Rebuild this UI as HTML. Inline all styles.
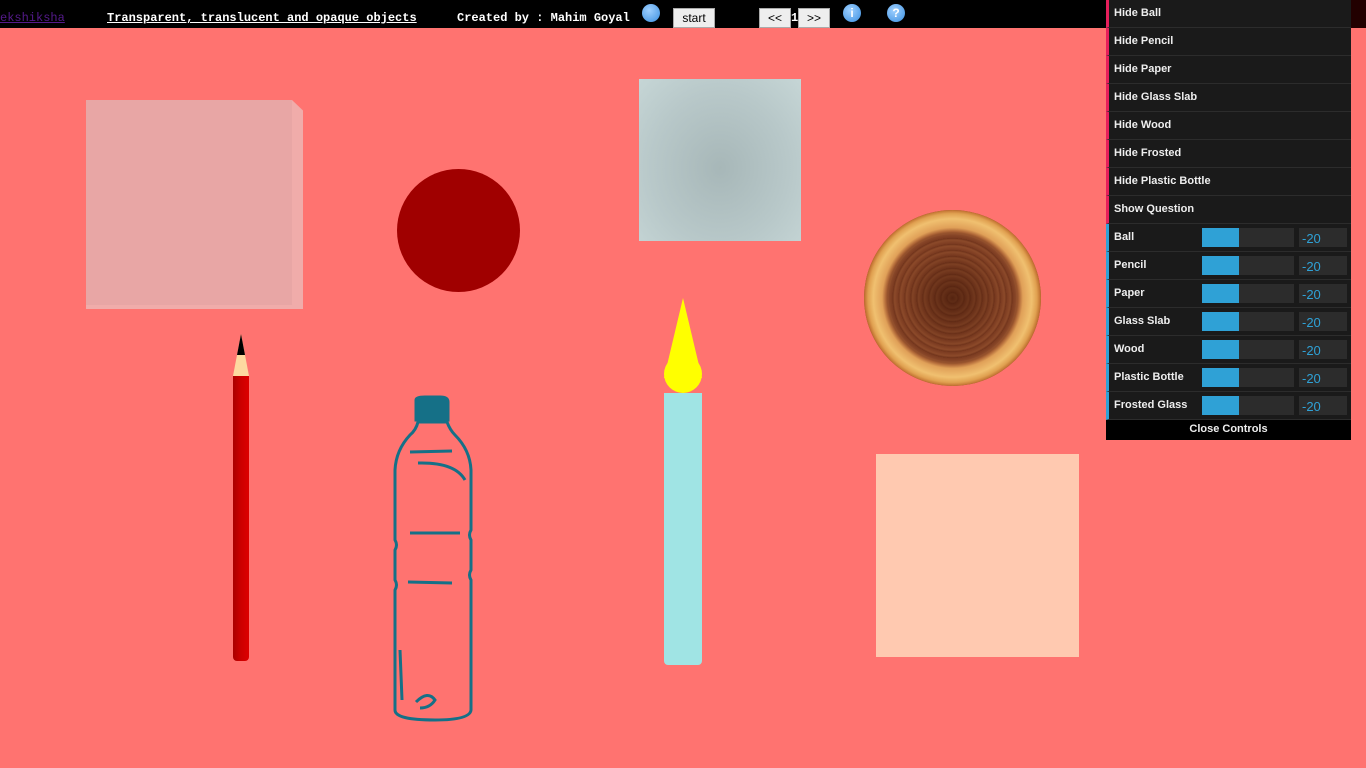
<!DOCTYPE html>
<html><head><meta charset="utf-8"><style>
body{margin:0;width:1366px;height:768px;overflow:hidden;background:#ff7370;font-family:"Liberation Sans",sans-serif;position:relative}
.top{position:absolute;left:0;top:0;width:1366px;height:28px;background:#000;font-family:"Liberation Mono",monospace;font-size:12px;font-weight:bold;color:#fff}
.top span{position:absolute;top:11px;line-height:14px}
.btn{position:absolute;top:8px;height:20px;background:#eee;border:1px solid #aaa;box-sizing:border-box;color:#000;font-family:"Liberation Sans",sans-serif;font-size:12px;font-weight:normal;text-align:center;line-height:18px}
.panel{position:absolute;left:1106px;top:0;width:245px;background:#1a1a1a}
.row{height:27px;border-bottom:1px solid #2c2c2c;border-left:3px solid #e61f5b;color:#eee;font-size:11px;font-weight:bold;line-height:27px;padding-left:5px;position:relative}
.row.s{border-left-color:#2fa1d6}
.bar{position:absolute;left:93px;top:4px;width:92px;height:19px;background:#2c2c2c}
.bar i{display:block;width:37px;height:19px;background:#2fa1d6}
.num{position:absolute;left:190px;top:4px;width:48px;height:19px;background:#2c2c2c;color:#2fa1d6;font-size:13px;font-weight:normal;line-height:21px;padding-left:3px;box-sizing:border-box}
.close{height:20px;background:#000;color:#eee;font-size:11px;font-weight:bold;text-align:center;line-height:19px}
.circ{position:absolute;border-radius:50%}
</style></head><body>
<div class="top">
<span style="left:0;color:#551a8b;text-decoration:underline;font-weight:normal">ekshiksha</span>
<span style="left:107px;text-decoration:underline">Transparent, translucent and opaque objects</span>
<span style="left:457px">Created by : Mahim Goyal</span>
<div class="circ" style="left:642px;top:4px;width:18px;height:18px;background:radial-gradient(circle at 40% 35%,#9fd0ff,#3b8fe0)"></div>
<div class="btn" style="left:673px;width:42px">start</div>
<div class="btn" style="left:759px;width:32px">&lt;&lt;</div>
<span style="left:791px">1</span>
<div class="btn" style="left:798px;width:32px">&gt;&gt;</div>
<div class="circ" style="left:843px;top:4px;width:18px;height:18px;background:radial-gradient(circle at 40% 35%,#9fd0ff,#3b8fe0);color:#fff;font:bold 12px 'Liberation Sans';text-align:center;line-height:18px">i</div>
<div class="circ" style="left:887px;top:4px;width:18px;height:18px;background:radial-gradient(circle at 40% 35%,#9fd0ff,#3b8fe0);color:#fff;font:bold 12px 'Liberation Sans';text-align:center;line-height:18px">?</div>
</div>
<div style="position:absolute;left:1351px;top:0;width:15px;height:768px;background:#ff7370"></div>
<div style="position:absolute;left:1351px;top:0;width:15px;height:28px;background:#200"></div>

<div style="position:absolute;left:86px;top:100px;width:206px;height:205px;background:#e8a6a5"></div>
<div style="position:absolute;left:292px;top:100px;width:11px;height:209px;background:#f0acaa;clip-path:polygon(0 0,100% 5%,100% 100%,0 98%)"></div>
<div style="position:absolute;left:86px;top:305px;width:217px;height:4px;background:#f0acaa"></div>
<div class="circ" style="left:397px;top:169px;width:123px;height:123px;background:#a00000"></div>
<div style="position:absolute;left:639px;top:79px;width:162px;height:162px;background:radial-gradient(ellipse at 50% 55%,#a7b7b8,#b8c8c9 60%,#c6d6d6)"></div>
<div class="circ" style="left:864px;top:210px;width:177px;height:176px;background:radial-gradient(circle,rgba(60,20,5,.6) 0,rgba(0,0,0,0) 40%),repeating-radial-gradient(circle,#7a3a20 0,#8c4a2a 4px,#6e321a 6px),#8c4a2a"></div>
<div class="circ" style="left:864px;top:210px;width:177px;height:176px;background:radial-gradient(circle closest-side,rgba(0,0,0,0) 0,rgba(0,0,0,0) 72%,#b06838 76%,#e0a058 80%,#f0c070 90%,#e0a050 96%,#c07030 100%)"></div>
<div style="position:absolute;left:233px;top:334px;width:16px;height:42px;background:#fdd9a0;clip-path:polygon(50% 0,100% 100%,0 100%)"></div>
<div style="position:absolute;left:233px;top:334px;width:16px;height:42px;background:#000;clip-path:polygon(50% 0,75% 50%,25% 50%)"></div>
<div style="position:absolute;left:233px;top:376px;width:16px;height:285px;background:linear-gradient(90deg,#a00,#c00 50%,#d00);border-radius:0 0 4px 4px"></div>
<svg style="position:absolute;left:380px;top:390px" width="110" height="340" viewBox="0 0 110 340" fill="none" stroke="#157087" stroke-width="3">
<path d="M36 10 Q36 7 45 7 L60 7 Q68 7 68 12 L68 30 L36 30 Z" fill="#157087"/>
<path d="M38 32 L67 32 Q70 40 75 45 Q90 60 91 80 L91 140 Q88 145 91 150 L91 180 Q88 185 91 190 L91 320 Q90 330 55 330 Q15 330 15 320 L15 200 Q18 195 15 190 L15 160 Q18 155 15 150 L15 80 Q16 60 30 45 Q36 40 38 32 Z"/>
<path d="M30 62 L72 61 M38 73 Q75 72 85 90 M30 143 L80 143 M28 192 L72 193 M20 260 L22 310 M36 312 Q48 300 55 310 Q50 318 40 318"/>
</svg>
<div style="position:absolute;left:664px;top:393px;width:38px;height:272px;background:#a0e4e4;border-radius:0 0 4px 4px"></div>
<div style="position:absolute;left:664px;top:298px;width:38px;height:80px;background:#ff0;clip-path:polygon(50% 0,100% 100%,0 100%)"></div>
<div class="circ" style="left:664px;top:355px;width:38px;height:38px;background:#ff0"></div>
<div style="position:absolute;left:876px;top:454px;width:203px;height:203px;background:#ffc9b0"></div>

<div class="panel">
<div class="row">Hide Ball</div><div class="row">Hide Pencil</div><div class="row">Hide Paper</div><div class="row">Hide Glass Slab</div><div class="row">Hide Wood</div><div class="row">Hide Frosted</div><div class="row">Hide Plastic Bottle</div><div class="row">Show Question</div>
<div class="row s">Ball<div class="bar"><i></i></div><div class="num">-20</div></div>
<div class="row s">Pencil<div class="bar"><i></i></div><div class="num">-20</div></div>
<div class="row s">Paper<div class="bar"><i></i></div><div class="num">-20</div></div>
<div class="row s">Glass Slab<div class="bar"><i></i></div><div class="num">-20</div></div>
<div class="row s">Wood<div class="bar"><i></i></div><div class="num">-20</div></div>
<div class="row s">Plastic Bottle<div class="bar"><i></i></div><div class="num">-20</div></div>
<div class="row s">Frosted Glass<div class="bar"><i></i></div><div class="num">-20</div></div>
<div class="close">Close Controls</div>
</div>
</body></html>
